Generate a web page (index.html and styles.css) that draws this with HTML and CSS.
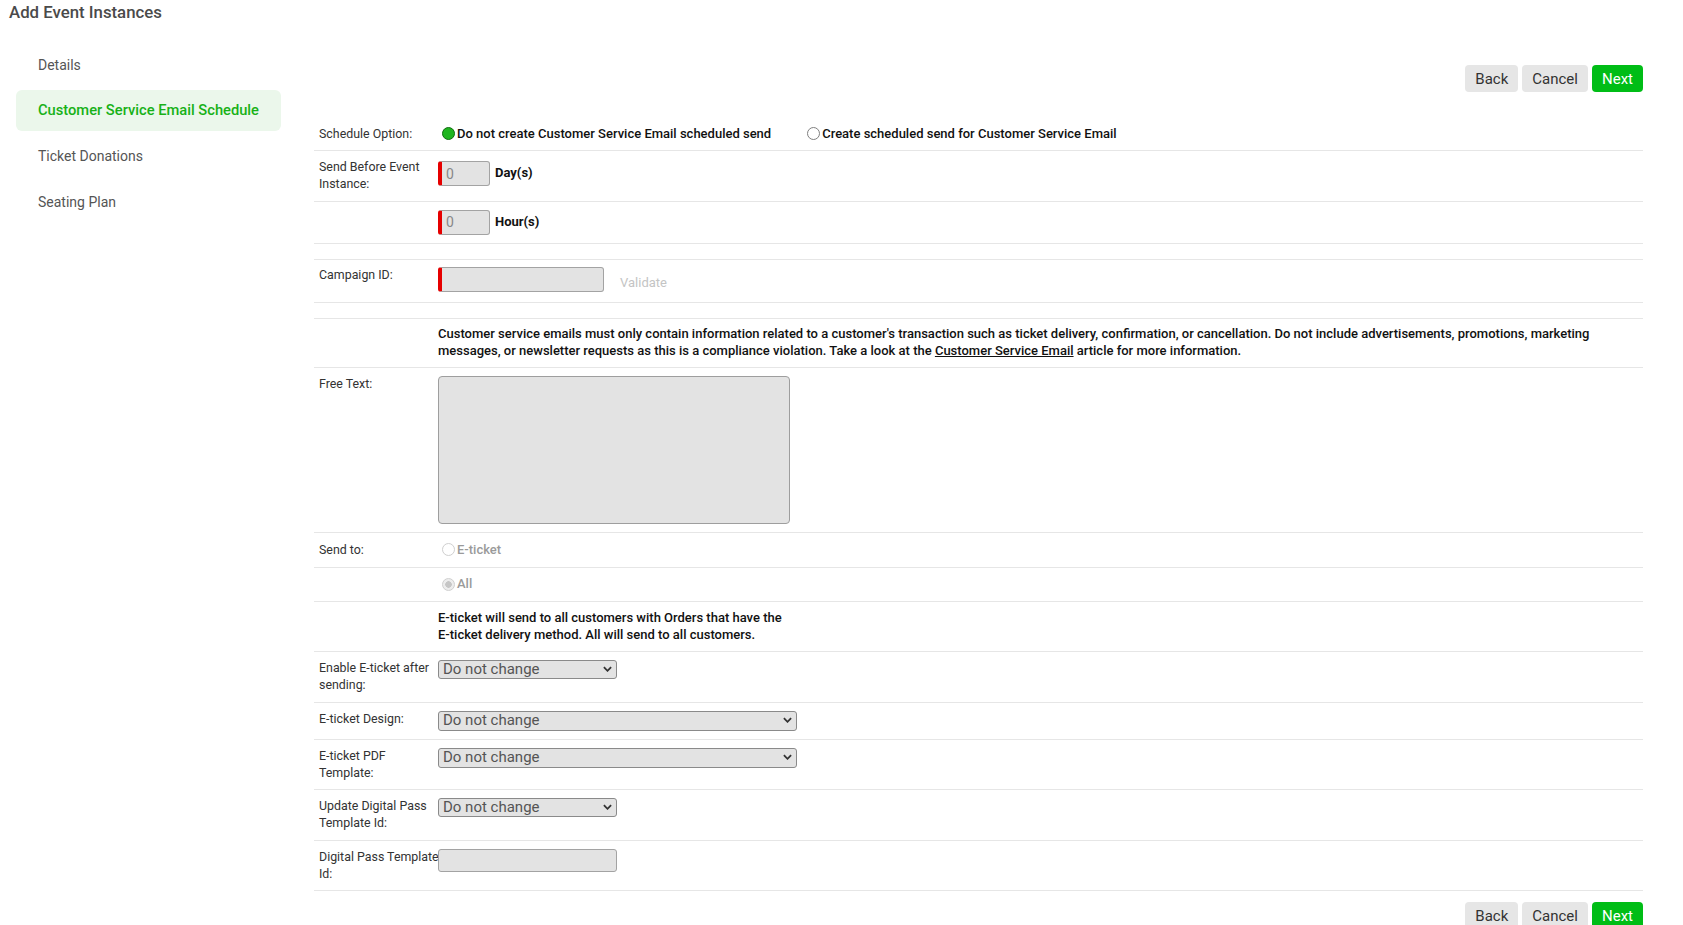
FILE: index.html
```html
<!DOCTYPE html>
<html lang="en">
<head>
    <meta charset="UTF-8">
    <meta name="viewport" content="width=device-width, initial-scale=1.0">
    <title>Add Event Instances</title>
    <link rel="stylesheet" href="styles.css">
</head>
<body>
    <h1 class="page-title">Add Event Instances</h1>

    <div class="layout">
        <nav class="steps">
            <a class="step" href="#">Details</a>
            <a class="step active" href="#">Customer Service Email Schedule</a>
            <a class="step" href="#">Ticket Donations</a>
            <a class="step" href="#">Seating Plan</a>
        </nav>

        <main class="content">
            <div class="actions">
                <button class="btn">Back</button>
                <button class="btn">Cancel</button>
                <button class="btn btn-primary">Next</button>
            </div>

            <div class="form">
                <div class="row">
                    <div class="row-label">Schedule Option:</div>
                    <div class="row-value">
                        <label class="option"><input type="radio" class="radio" name="schedule" checked>Do not create Customer Service Email scheduled send</label>
                        <label class="option option-gap"><input type="radio" class="radio" name="schedule">Create scheduled send for Customer Service Email</label>
                    </div>
                </div>

                <div class="row row-days">
                    <div class="row-label">Send Before Event Instance:</div>
                    <div class="row-value">
                        <input class="field field-num required" type="text" value="0"><span class="unit">Day(s)</span>
                    </div>
                </div>

                <div class="row">
                    <div class="row-label"></div>
                    <div class="row-value">
                        <input class="field field-num required" type="text" value="0"><span class="unit">Hour(s)</span>
                    </div>
                </div>

                <div class="row row-spacer"></div>

                <div class="row row-campaign">
                    <div class="row-label">Campaign ID:</div>
                    <div class="row-value">
                        <input class="field field-campaign required" type="text"><span class="validate">Validate</span>
                    </div>
                </div>

                <div class="row row-spacer"></div>

                <div class="row row-notice">
                    <div class="row-label"></div>
                    <div class="row-value notice">
                        Customer service emails must only contain information related to a customer's transaction such as ticket delivery, confirmation, or cancellation. Do not include advertisements, promotions, marketing<br>
                        messages, or newsletter requests as this is a compliance violation. Take a look at the <a href="#">Customer Service Email</a> article for more information.
                    </div>
                </div>

                <div class="row">
                    <div class="row-label">Free Text:</div>
                    <div class="row-value">
                        <textarea class="field free-text"></textarea>
                    </div>
                </div>

                <div class="row row-radio">
                    <div class="row-label">Send to:</div>
                    <div class="row-value">
                        <label class="option disabled"><input type="radio" class="radio" name="sendto" disabled>E-ticket</label>
                    </div>
                </div>

                <div class="row row-radio">
                    <div class="row-label"></div>
                    <div class="row-value">
                        <label class="option disabled"><input type="radio" class="radio" name="sendto" checked disabled>All</label>
                    </div>
                </div>

                <div class="row">
                    <div class="row-label"></div>
                    <div class="row-value info">
                        E-ticket will send to all customers with Orders that have the<br>
                        E-ticket delivery method. All will send to all customers.
                    </div>
                </div>

                <div class="row">
                    <div class="row-label">Enable E-ticket after sending:</div>
                    <div class="row-value">
                        <span class="select">
                            <select class="select-short"><option>Do not change</option></select>
                            <svg class="chevron" viewBox="0 0 10 6"><polyline points="1,1 5,5 9,1"/></svg>
                        </span>
                    </div>
                </div>

                <div class="row">
                    <div class="row-label">E-ticket Design:</div>
                    <div class="row-value">
                        <span class="select">
                            <select class="select-long"><option>Do not change</option></select>
                            <svg class="chevron" viewBox="0 0 10 6"><polyline points="1,1 5,5 9,1"/></svg>
                        </span>
                    </div>
                </div>

                <div class="row">
                    <div class="row-label">E-ticket PDF Template:</div>
                    <div class="row-value">
                        <span class="select">
                            <select class="select-long"><option>Do not change</option></select>
                            <svg class="chevron" viewBox="0 0 10 6"><polyline points="1,1 5,5 9,1"/></svg>
                        </span>
                    </div>
                </div>

                <div class="row">
                    <div class="row-label">Update Digital Pass Template Id:</div>
                    <div class="row-value">
                        <span class="select">
                            <select class="select-short"><option>Do not change</option></select>
                            <svg class="chevron" viewBox="0 0 10 6"><polyline points="1,1 5,5 9,1"/></svg>
                        </span>
                    </div>
                </div>

                <div class="row">
                    <div class="row-label">Digital Pass Template Id:</div>
                    <div class="row-value">
                        <input class="field field-pass" type="text">
                    </div>
                </div>
            </div>

            <div class="actions actions-bottom">
                <button class="btn">Back</button>
                <button class="btn">Cancel</button>
                <button class="btn btn-primary">Next</button>
            </div>
        </main>
    </div>
</body>
</html>
```

FILE: styles.css
```css
body {
    margin: 0;
    font-family: Roboto, 'Liberation Sans', Arial, sans-serif;
    color: #333;
    background-color: #fff;
}
.page-title {
    margin: 0;
    padding-left: 9px;
    font-size: 16.8px;
    font-weight: 500;
    line-height: 24px;
    color: #4a4a4a;
}
.layout {
    display: flex;
    align-items: flex-start;
    padding: 0 40px 0 16px;
}

/* left step menu */
.steps {
    width: 265px;
    flex: none;
    padding-top: 20px;
    display: flex;
    flex-direction: column;
    gap: 4.5px;
}
.step {
    display: block;
    height: 41px;
    line-height: 42px;
    padding-left: 22px;
    border-radius: 6px;
    font-size: 14px;
    color: #555;
    text-decoration: none;
}
.step.active {
    background-color: #ebf7eb;
    color: #17b117;
    font-size: 14.7px;
    font-weight: 500;
    line-height: 41px;
}

.content {
    flex: 1;
    margin-left: 33px;
}
.actions {
    display: flex;
    justify-content: flex-end;
    gap: 4px;
    margin-top: 41px;
}
.actions-bottom {
    margin-top: 11px;
}
.btn {
    height: 27px;
    padding: 0 10px;
    border: none;
    border-radius: 4px;
    background-color: #e6e6e6;
    color: #333;
    font-family: inherit;
    font-size: 15px;
    cursor: pointer;
}
.btn-primary {
    background-color: #00bd16;
    color: #fff;
}

/* form rows */
.form {
    margin-top: 25.5px;
}
.row {
    display: grid;
    grid-template-columns: 124px 1fr;
    padding: 8px 0;
    border-bottom: 1px solid #e6e6e6;
    font-size: 13px;
    line-height: 16.75px;
}
.row-spacer {
    padding: 0;
    height: 15px;
}
.row-days .row-value {
    padding-top: 2px;
}
.row-campaign {
    padding: 7px 0 10px;
}
.row-notice {
    padding: 7px 0 8px;
}
.row-radio {
    padding: 8.25px 0;
}
.row-label {
    padding-left: 5px;
    margin-right: -4px;
    font-size: 12.4px;
    color: #333;
}
.row-value {
    display: flex;
    align-items: center;
    align-self: start;
    color: #111;
}

.option {
    display: inline-flex;
    align-items: center;
    font-weight: 500;
    color: #111;
}
.option-gap {
    margin-left: 32px;
}
.option.disabled {
    color: #9a9a9a;
}
.radio {
    appearance: none;
    width: 13px;
    height: 13px;
    margin: 0 2px 0 4px;
    border: 1px solid #808080;
    border-radius: 50%;
    background-color: #fff;
}
.radio:checked {
    background-color: #1fb51f;
    border-color: #0e6e0e;
}
.radio:disabled {
    border-color: #cfcfcf;
}
.radio:disabled:checked {
    background: radial-gradient(circle, #c6c6c6 0 3px, #ededed 3.5px);
    border-color: #cfcfcf;
}

.field {
    box-sizing: border-box;
    height: 25px;
    padding: 0 4px;
    background-color: #e3e3e3;
    border: 1px solid #a3a3a3;
    border-radius: 3px;
    font-family: inherit;
    font-size: 14px;
    color: #888;
}
.field.required {
    border-left: 4px solid #e60000;
}
.field-num {
    width: 52px;
}
.field-campaign {
    width: 166px;
}
.field-pass {
    width: 179px;
    height: 23px;
}
.unit {
    margin-left: 5px;
    font-weight: 700;
    color: #111;
}
.validate {
    align-self: flex-end;
    margin-left: 16px;
    color: #c4c4c4;
}
.free-text {
    width: 352px;
    height: 148px;
    border-color: #9e9e9e;
    border-radius: 4px;
    resize: none;
}

.notice {
    display: block;
    font-weight: 500;
    color: #111;
}
.notice a {
    color: #111;
}
.info {
    display: block;
    font-weight: 500;
    color: #111;
}

/* dropdowns */
.select {
    position: relative;
    display: inline-block;
}
.select select {
    appearance: none;
    box-sizing: border-box;
    height: 19px;
    padding: 0 4px;
    background-color: #e3e3e3;
    border: 1px solid #8a8a8a;
    border-radius: 3px;
    font-family: inherit;
    font-size: 15px;
    line-height: 17px;
    color: #555;
}
.select-short {
    width: 179px;
}
.select-long {
    width: 359px;
    height: 20px !important;
}
.chevron {
    position: absolute;
    right: 5px;
    top: 6px;
    width: 9px;
    height: 6px;
    fill: none;
    stroke: #333;
    stroke-width: 2;
}
```
